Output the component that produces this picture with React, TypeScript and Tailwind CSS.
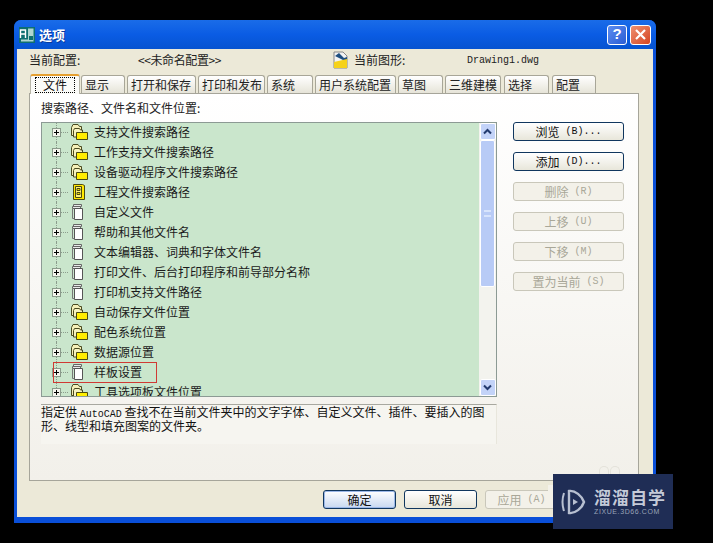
const cjk = { fontFamily: '"Noto Sans CJK SC", "Liberation Sans", sans-serif' };
const mono = { fontFamily: '"Liberation Mono", monospace' };

const tabs = [
  { label: '显示', w: 'w-[44px]', ml: 'ml-[1px]' },
  { label: '打开和保存', w: 'w-[69px]', ml: 'ml-[2px]' },
  { label: '打印和发布', w: 'w-[67px]', ml: 'ml-[2px]' },
  { label: '系统', w: 'w-[46px]', ml: 'ml-[2px]' },
  { label: '用户系统配置', w: 'w-[81px]', ml: 'ml-[2px]' },
  { label: '草图', w: 'w-[45px]', ml: 'ml-[2px]' },
  { label: '三维建模', w: 'w-[56px]', ml: 'ml-[2px]' },
  { label: '选择', w: 'w-[45px]', ml: 'ml-[3px]' },
  { label: '配置', w: 'w-[44px]', ml: 'ml-[3px]' },
];

type Kind = 'folder' | 'doc' | 'project';

const rows: { label: string; kind: Kind }[] = [
  { label: '支持文件搜索路径', kind: 'folder' },
  { label: '工作支持文件搜索路径', kind: 'folder' },
  { label: '设备驱动程序文件搜索路径', kind: 'folder' },
  { label: '工程文件搜索路径', kind: 'project' },
  { label: '自定义文件', kind: 'doc' },
  { label: '帮助和其他文件名', kind: 'doc' },
  { label: '文本编辑器、词典和字体文件名', kind: 'doc' },
  { label: '打印文件、后台打印程序和前导部分名称', kind: 'doc' },
  { label: '打印机支持文件路径', kind: 'doc' },
  { label: '自动保存文件位置', kind: 'folder' },
  { label: '配色系统位置', kind: 'folder' },
  { label: '数据源位置', kind: 'folder' },
  { label: '样板设置', kind: 'doc' },
  { label: '工具选项板文件位置', kind: 'folder' },
];

const sideButtons = [
  { name: '浏览', key: '(B)...', on: true },
  { name: '添加', key: '(D)...', on: true },
  { name: '删除', key: '(R)', on: false },
  { name: '上移', key: '(U)', on: false },
  { name: '下移', key: '(M)', on: false },
  { name: '置为当前', key: '(S)', on: false },
];

function TreeIcon({ kind }: { kind: Kind }) {
  if (kind === 'folder') {
    return (
      <svg width="19" height="18" viewBox="0 0 19 18">
        <path d="M1.5 4.5l1.5-3h5l1.5 2h2v9h-10z" fill="#f4efb8" stroke="#4a4a20" />
        <path d="M3.5 7.5l1-2h5l1 1.5h2v7h-9z" fill="#f7f3c0" stroke="#4a4a20" />
        <path d="M6.5 9.5h11v7h-11z" fill="#ffee00" stroke="#4a4a10" />
      </svg>
    );
  }
  if (kind === 'project') {
    return (
      <svg width="18" height="18" viewBox="0 0 18 18">
        <path d="M3.5 1.5h9l2 1v14h-11z" fill="#ffe800" stroke="#4a4a10" />
        <path d="M5.5 3.5h6v11h-6z" fill="#fff27a" stroke="#4a4a10" />
        <path d="M7 5.5h3v2h-3zM7 9.5h3v2h-3z" fill="#ffe800" stroke="#4a4a10" />
      </svg>
    );
  }
  return (
    <svg width="18" height="18" viewBox="0 0 18 18">
      <path d="M3.5 1.5h8v2h-8z" fill="#e8e8e8" stroke="#666" />
      <path d="M2.5 3.5h8v2h-8z" fill="#e8e8e8" stroke="#666" />
      <path d="M4.5 5.5h8v11h-8z" fill="#fff" stroke="#555" />
      <path d="M2.5 5.5v10h2" fill="none" stroke="#777" />
    </svg>
  );
}

function TreeRow({ label, kind }: { label: string; kind: Kind }) {
  return (
    <div className="relative flex h-[20px] shrink-0 items-center pl-[10px]">
      <div className="absolute left-[14px] top-0 h-full border-l border-dotted border-[#8c9c8c]" />
      <div className="relative flex h-[9px] w-[9px] items-center justify-center border border-[#8a9a8a] bg-[#f4f4ec]">
        <div className="absolute h-[1px] w-[5px] bg-black" />
        <div className="absolute h-[5px] w-[1px] bg-black" />
      </div>
      <div className="w-[7px] border-t border-dotted border-[#8c9c8c]" />
      <div className="ml-[2px] flex w-[24px] justify-start">
        <TreeIcon kind={kind} />
      </div>
      <span className="text-[12px] whitespace-nowrap text-[#1a1a1a]">{label}</span>
    </div>
  );
}

function ScrollArrow({ up }: { up: boolean }) {
  return (
    <div className="flex h-[17px] w-[16px] shrink-0 items-center justify-center rounded-[2px] border border-white bg-[#c3d3f8]">
      <svg width="9" height="7" viewBox="0 0 9 7">
        <path d={up ? 'M1 5.5l3.5-3.5 3.5 3.5' : 'M1 1.5l3.5 3.5 3.5-3.5'} fill="none" stroke="#223a6e" strokeWidth="2" />
      </svg>
    </div>
  );
}

function ButtonLabel({ name, keyText }: { name: string; keyText: string }) {
  return (
    <>
      <span>{name}</span>
      <span className="ml-[6px] text-[10px]" style={mono}>{keyText}</span>
    </>
  );
}

function SideButton({ name, keyText, on }: { name: string; keyText: string; on: boolean }) {
  return (
    <div
      className={
        on
          ? 'flex h-[19px] w-[111px] items-center justify-center rounded-[3px] border border-[#10365e] bg-gradient-to-b from-white to-[#e8e6da] text-[12px] text-[#111]'
          : 'flex h-[19px] w-[111px] items-center justify-center rounded-[3px] border border-[#c9c7ba] bg-[#f3f1e9] text-[12px] text-[#a9a798]'
      }
    >
      <ButtonLabel name={name} keyText={keyText} />
    </div>
  );
}

export default function App() {
  return (
    <div className="relative h-[543px] w-[713px] overflow-hidden bg-black pl-[14px] pt-[20px]" style={cjk}>
      {/* 窗口 */}
      <div className="flex h-[503px] w-[642px] flex-col rounded-t-[7px] bg-[#0a4fd8]">
        <div className="flex h-[29px] shrink-0 items-center rounded-t-[7px] bg-gradient-to-b from-[#1a6ce8] via-[#0a5ce4] to-[#0653d0] pl-[5px] pr-[5px]">
          <svg width="16" height="16" viewBox="0 0 16 16">
            <rect width="16" height="16" fill="#0e6f70" />
            <path d="M1.5 11V3h5v8M1.5 7h5" fill="none" stroke="#fff" strokeWidth="1.4" />
            <path d="M9 1.5h5.5v13H2v-2h7z" fill="#d8efe8" opacity="0.8" />
            <rect x="10" y="9" width="4" height="4" fill="#0e6f70" />
          </svg>
          <span className="ml-[4px] text-[13px] font-bold text-white [text-shadow:1px_1px_0_#0a3a9c]">选项</span>
          <div className="ml-auto flex items-center gap-[3px]">
            <div className="flex h-[20px] w-[20px] items-center justify-center rounded-[3px] border border-white bg-gradient-to-br from-[#5d8df0] to-[#2a5cd4]">
              <span className="text-[15px] font-bold text-white" style={{ fontFamily: '"Liberation Sans", sans-serif' }}>?</span>
            </div>
            <div className="flex h-[20px] w-[21px] items-center justify-center rounded-[3px] border border-white bg-gradient-to-br from-[#ee9070] to-[#d4421e]">
              <svg width="13" height="13" viewBox="0 0 13 13">
                <path d="M2 2l9 9M11 2l-9 9" stroke="#fff" strokeWidth="2.2" />
              </svg>
            </div>
          </div>
        </div>

        {/* 客户区 */}
        <div className="mx-[3px] flex h-[468px] flex-col bg-[#ece9d8] pl-[12px] pr-[14px]">
          <div className="flex h-[24px] shrink-0 items-center pb-[2px] text-[12px] text-[#222]">
            <span className="w-[109px]">当前配置:</span>
            <span className="w-[195px] tracking-[-0.4px]">&lt;&lt;未命名配置&gt;&gt;</span>
            <svg width="16" height="18" viewBox="0 0 16 18">
              <path d="M1 1h9l4 4v12H1z" fill="#f3f3f3" stroke="#888" />
              <path d="M2 5l4-3 5 5 3-1v5z" fill="#1f4f80" />
              <path d="M1 11l13-3v9H1z" fill="#f6d21a" />
            </svg>
            <span className="ml-[5px] w-[113px]">当前图形:</span>
            <span className="text-[10px]" style={mono}>Drawing1.dwg</span>
          </div>

          <div className="flex h-[20px] shrink-0 items-end pl-[1px]">
            <div className="relative z-10 mb-[-1px] flex h-[20px] w-[50px] items-start justify-center rounded-t-[3px] border-x border-[#b8b6a8] border-t-2 border-t-[#e6a030] bg-[#fbfbf8] pt-[1px]">
              <span className="border border-dotted border-black px-[7px] text-[12px] leading-[14px] text-[#111]">文件</span>
            </div>
            {tabs.map((t) => (
              <div
                key={t.label}
                className={`${t.w} ${t.ml} flex h-[18px] items-center whitespace-nowrap rounded-t-[3px] border-x border-t border-[#a8a698] bg-gradient-to-b from-white to-[#e6e4d8] pl-[3px] text-[12px] text-[#222]`}
              >
                {t.label}
              </div>
            ))}
          </div>

          {/* 选项卡内容 */}
          <div className="flex h-[388px] w-[610px] shrink-0 flex-col border border-[#a6a59a] bg-gradient-to-b from-white to-[#f2f0ea] pl-[11px]">
            <div className="flex h-[28px] shrink-0 items-center text-[12px] text-[#222]">搜索路径、文件名和文件位置:</div>
            <div className="flex gap-[16px]">
              <div className="flex w-[456px] shrink-0 flex-col">
                <div className="flex h-[275px] border border-[#8c9a94] bg-[#cae6cc]">
                  <div className="flex min-w-0 flex-1 flex-col overflow-hidden">
                    <div className="-mt-[1px] flex flex-col">
                      {rows.map((r) => (
                        <TreeRow key={r.label} label={r.label} kind={r.kind} />
                      ))}
                    </div>
                  </div>
                  <div className="flex w-[17px] shrink-0 flex-col items-center bg-[#f3f3ee]">
                    <ScrollArrow up />
                    <div className="relative flex h-[147px] w-[15px] shrink-0 items-center justify-center rounded-[2px] border border-white bg-[#b8cbf6]">
                      <div className="h-[7px] w-[7px] border-y-2 border-[#d8e4fc]" />
                    </div>
                    <div className="min-h-0 flex-1" />
                    <ScrollArrow up={false} />
                  </div>
                </div>
                <div className="mt-[7px] h-[40px] border-r border-t border-r-[#e8e6dc] border-t-[#a8a8a0] bg-[#f6f5f0] pt-[1px] text-[12px] leading-[12px] text-[#111]">
                  指定供 <span style={mono} className="text-[10px] leading-[10px]">AutoCAD</span> 查找不在当前文件夹中的文字字体、自定义文件、插件、要插入的图形、线型和填充图案的文件夹。
                </div>
              </div>
              <div className="flex flex-col gap-[11px]">
                {sideButtons.map((b) => (
                  <SideButton key={b.name} name={b.name} keyText={b.key} on={b.on} />
                ))}
              </div>
            </div>
          </div>

          <div className="flex flex-1 items-start gap-[8px] pl-[294px] pt-[9px] text-[12px]">
            <div className="flex h-[19px] w-[73px] items-center justify-center rounded-[3px] border border-[#10365e] bg-gradient-to-b from-white to-[#c8d8f0] text-[#111] shadow-[inset_0_0_0_1px_#9cb8e8]">确定</div>
            <div className="flex h-[19px] w-[73px] items-center justify-center rounded-[3px] border border-[#10365e] bg-gradient-to-b from-white to-[#e8e6da] text-[#111]">取消</div>
            <div className="flex h-[19px] w-[73px] items-center justify-center rounded-[3px] border border-[#c9c7ba] bg-[#f3f1e9] text-[#a9a798]">
              <ButtonLabel name="应用" keyText="(A)" />
            </div>
          </div>
        </div>
      </div>

      {/* 红框标注 */}
      <div className="absolute left-[53px] top-[362px] h-[21px] w-[104px] border border-[#d03a34]" />

      {/* 水印 */}
      <div className="absolute left-[599px] top-[466px] flex gap-[1px]">
        <div className="h-[9px] w-[10px] rounded-t-full border-x border-t border-[#e4e2da]" />
        <div className="h-[9px] w-[10px] rounded-t-full border-x border-t border-[#e4e2da]" />
      </div>
      <div className="absolute left-[548px] top-[485px] h-[20px] w-[5px] bg-[#f3f1e9]" />
      <div className="absolute left-[553px] top-[474px] flex h-[55px] w-[120px] items-center bg-[#1f2d55] pl-[8px]">
        <svg width="25" height="28" viewBox="0 0 25 28">
          <path d="M3 5c-2 6-2 12 0 18" fill="none" stroke="#b7bfd0" strokeWidth="2" />
          <path d="M8 3v22c6 1 13-5 15-11C21 8 14 2 8 3z" fill="none" stroke="#b7bfd0" strokeWidth="2.4" />
          <path d="M12 11l5 3-5 3z" fill="#b7bfd0" />
        </svg>
        <div className="ml-[8px] flex flex-col">
          <span className="text-[17px] font-bold leading-[20px] tracking-[1px] text-[#c4cad8]">溜溜自学</span>
          <span className="text-[7px] leading-[10px] tracking-[0.6px] text-[#9aa3b8]" style={{ fontFamily: '"Liberation Sans", sans-serif' }}>ZIXUE.3D66.COM</span>
        </div>
      </div>
    </div>
  );
}
